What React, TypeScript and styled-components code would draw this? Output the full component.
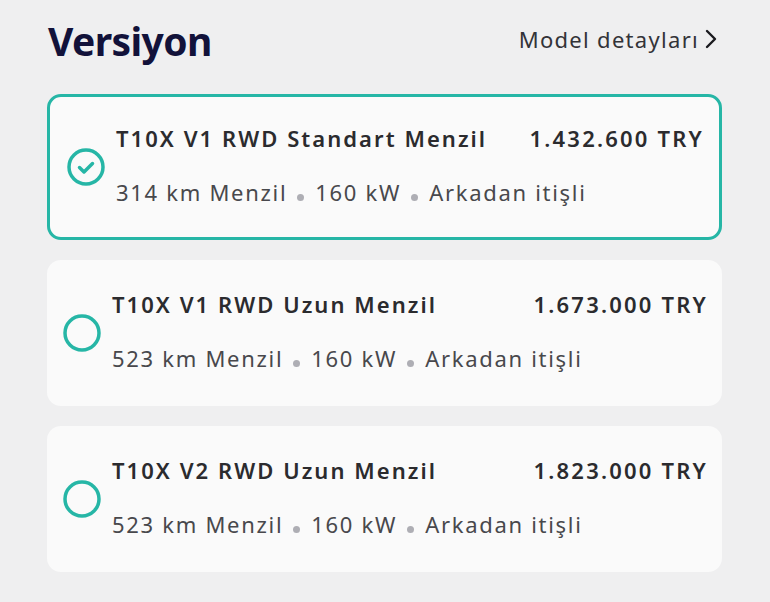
import React from 'react'
import styled, { createGlobalStyle } from 'styled-components'

const GlobalStyle = createGlobalStyle`
  html, body {
    margin: 0;
    padding: 0;
    background: #efeff0;
  }
  body {
    font-family: 'Noto Sans', 'Open Sans', sans-serif;
    -webkit-font-smoothing: antialiased;
  }
`

const Page = styled.div`
  width: 770px;
  height: 602px;
  box-sizing: border-box;
  padding: 12px 48px 0 47px;
  background: #efeff0;
`

const Header = styled.div`
  display: flex;
  align-items: center;
  justify-content: space-between;
  height: 60px;
  margin-bottom: 22px;
`

const Title = styled.h1`
  margin: 0 0 4px;
  padding-left: 1px;
  font-size: 39px;
  font-weight: 700;
  color: #12123a;
  letter-spacing: -0.6px;
`

const DetailLink = styled.a`
  display: flex;
  align-items: center;
  gap: 5px;
  font-size: 22px;
  color: #333338;
  letter-spacing: 1.3px;
  cursor: pointer;
  margin-top: -6px;
  margin-right: 4px;
`

const List = styled.div`
  display: flex;
  flex-direction: column;
  gap: 20px;
`

const Card = styled.div<{ $selected?: boolean }>`
  display: flex;
  align-items: center;
  gap: 11px;
  height: 146px;
  box-sizing: border-box;
  padding: ${({ $selected }) => ($selected ? '0 17px 0 17px' : '0 16px 0 16px')};
  background: #fafafa;
  border-radius: 14px;
  border: ${({ $selected }) => ($selected ? '3px solid #26b6a6' : 'none')};
`

const Body = styled.div`
  flex: 1;
  display: flex;
  flex-direction: column;
  gap: 24px;
  padding-bottom: 5px;
`

const TopRow = styled.div`
  display: flex;
  justify-content: space-between;
  align-items: baseline;
`

const Name = styled.span`
  font-size: 22px;
  font-weight: 600;
  color: #2b2b2e;
  letter-spacing: 2.05px;
`

const Price = styled.span`
  font-size: 22px;
  font-weight: 600;
  color: #2b2b2e;
  letter-spacing: 2.2px;
  margin-right: -2px;
`

const Specs = styled.div`
  display: flex;
  align-items: baseline;
  font-size: 22px;
  color: #48484c;
  letter-spacing: 1.7px;
`

const Dot = styled.span`
  display: inline-block;
  width: 7px;
  height: 7px;
  border-radius: 50%;
  background: #aeaeb4;
  margin: 0 11px 0 10px;
`

const Radio = ({ checked }: { checked?: boolean }) => (
  <svg width="38" height="38" viewBox="0 0 38 38">
    <circle cx="19" cy="19" r="17" fill="none" stroke="#26b6a6" strokeWidth="3.5" />
    {checked && (
      <path d="M12.5 19.5l4.5 4.5 8.5-8.5" fill="none" stroke="#26b6a6" strokeWidth="3.5" strokeLinecap="round" strokeLinejoin="round" />
    )}
  </svg>
)

const Chevron = () => (
  <svg width="14" height="22" viewBox="0 0 14 22">
    <path d="M3 3l8 8-8 8" fill="none" stroke="#1a1a1f" strokeWidth="2.4" strokeLinecap="round" strokeLinejoin="round" />
  </svg>
)

const versions = [
  { name: 'T10X V1 RWD Standart Menzil', price: '1.432.600 TRY', range: '314 km Menzil', selected: true },
  { name: 'T10X V1 RWD Uzun Menzil', price: '1.673.000 TRY', range: '523 km Menzil' },
  { name: 'T10X V2 RWD Uzun Menzil', price: '1.823.000 TRY', range: '523 km Menzil' },
]

const App = () => (
  <Page>
    <GlobalStyle />
    <Header>
      <Title>Versiyon</Title>
      <DetailLink>
        Model detayları
        <Chevron />
      </DetailLink>
    </Header>
    <List>
      {versions.map((v) => (
        <Card key={v.name} $selected={v.selected}>
          <Radio checked={v.selected} />
          <Body>
            <TopRow>
              <Name>{v.name}</Name>
              <Price>{v.price}</Price>
            </TopRow>
            <Specs>
              {v.range}
              <Dot />
              160 kW
              <Dot />
              Arkadan itişli
            </Specs>
          </Body>
        </Card>
      ))}
    </List>
  </Page>
)

export default App
